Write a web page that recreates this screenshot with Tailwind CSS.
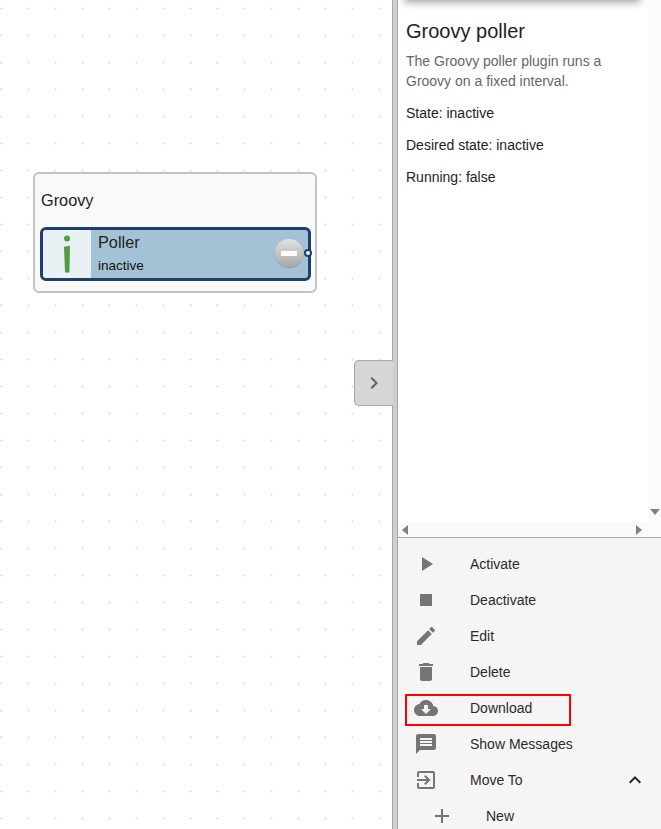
<!DOCTYPE html>
<html lang="en">
<head>
  <meta charset="UTF-8">
  <title>Groovy poller</title>
  <script src="https://cdn.jsdelivr.net/npm/@tailwindcss/browser@4"></script>
</head>
<body class="bg-white overflow-hidden font-['Liberation_Sans',Arial,sans-serif] text-[#222]">
  <div class="flex w-[661px] h-[829px] overflow-hidden">

    <!-- canvas -->
    <div class="relative w-[392px] h-full bg-white bg-[radial-gradient(circle_at_1.5px_8.5px,#e6e6e6_1px,transparent_1.4px)] bg-[size:27px_27px]">
      <div class="absolute left-[33px] top-[172px] w-[284px] h-[121px] bg-[#f9f9f9] border-2 border-[#c2c2c2] rounded-md">
        <div class="absolute left-[6px] top-[16px] text-[16.3px] leading-5">Groovy</div>
        <div class="absolute left-[5px] top-[53px] w-[271px] h-[54px] flex bg-[#a4c2d5] border-[3px] border-[#1d3f6b] rounded-md">
          <div class="w-[48px] h-full flex items-center justify-center bg-[#e9f1f5] rounded-l-[3px]">
            <svg width="12" height="40" viewBox="0 0 12 40">
              <circle cx="6" cy="4.5" r="3" fill="#4f9f3f"/>
              <path d="M3 12.8 L9 11.8 L8.4 38.5 H4 Z" fill="#4f9f3f"/>
            </svg>
          </div>
          <div class="pl-[7px] flex flex-col">
            <div class="text-[16.3px] leading-5 mt-[2px]">Poller</div>
            <div class="text-[13.5px] leading-4 mt-[6px] text-[#111]">inactive</div>
          </div>
          <div class="absolute left-[232px] top-[9px] w-[28px] h-[28px] rounded-full bg-[linear-gradient(#e2e2e2,#a8a8a8)] shadow-[0_1px_1px_#8a9aa5] flex items-center justify-center">
            <div class="w-4 h-[5px] bg-white"></div>
          </div>
          <div class="absolute left-[261px] top-[19px] w-[8px] h-[8px] rounded-full bg-white border-2 border-[#1d3f6b]"></div>
        </div>
      </div>

      <!-- panel toggle -->
      <button class="absolute left-[354px] top-[360px] w-[39px] h-[46px] flex items-center justify-center bg-[#d6d6d6] border border-r-0 border-[#a8a8a8] rounded-l-[5px]">
        <svg width="24" height="24" viewBox="0 0 24 24" fill="#616161"><path d="M10 6L8.59 7.41 13.17 12l-4.58 4.59L10 18l6-6z"/></svg>
      </button>
    </div>

    <!-- splitter -->
    <div class="w-[6px] h-full bg-[#cfcfcf] border-x border-[#a6a6a6]"></div>

    <!-- right panel -->
    <div class="w-[263px] h-full flex flex-col">
      <div class="relative h-[538px] shrink-0 border-b border-[#a9a9a9] overflow-hidden flex">
        <div class="absolute left-[8px] top-[-20px] w-[232px] h-[20px] bg-white shadow-[0_0_9px_2px_rgba(0,0,0,0.4)]"></div>
        <div class="w-[250px] h-full flex flex-col">
          <div class="flex-1 pl-2 pt-[20px] text-sm">
            <h2 class="text-xl leading-[23px] text-[#222]">Groovy poller</h2>
            <p class="mt-[8px] leading-5 text-[#666]">The Groovy poller plugin runs a<br>Groovy on a fixed interval.</p>
            <p class="mt-3 leading-5">State: inactive</p>
            <p class="mt-3 leading-5">Desired state: inactive</p>
            <p class="mt-3 leading-5">Running: false</p>
          </div>
          <div class="h-[15px] bg-[#fafafa] flex items-center justify-between px-[4px]">
            <svg width="7" height="10" viewBox="0 0 7 10" fill="#808080"><path d="M6 0v10L0 5z"/></svg>
            <svg width="7" height="10" viewBox="0 0 7 10" fill="#808080" class="mr-[1px]"><path d="M0 0v10l6-5z"/></svg>
          </div>
        </div>
        <div class="w-[13px] h-full bg-[#fcfcfc] relative">
          <svg width="10" height="6" viewBox="0 0 10 6" fill="#808080" class="absolute left-[2px] top-[509px]"><path d="M0 0h10L5 6z"/></svg>
        </div>
      </div>

      <ul class="flex-1 bg-[#f5f5f5] pt-2 text-sm text-[#2b2b2b] overflow-hidden">
        <li class="h-9 flex items-center pl-4">
          <div class="w-14"><svg width="24" height="24" viewBox="0 0 24 24" fill="#757575"><path d="M8 5v14l11-7z"/></svg></div>
          <span>Activate</span>
        </li>
        <li class="h-9 flex items-center pl-4">
          <div class="w-14"><svg width="24" height="24" viewBox="0 0 24 24" fill="#757575"><path d="M6 6h12v12H6z"/></svg></div>
          <span>Deactivate</span>
        </li>
        <li class="h-9 flex items-center pl-4">
          <div class="w-14"><svg width="24" height="24" viewBox="0 0 24 24" fill="#757575"><path d="M3 17.25V21h3.75L17.81 9.94l-3.75-3.75L3 17.25zM20.71 7.04c.39-.39.39-1.02 0-1.41l-2.34-2.34c-.39-.39-1.02-.39-1.41 0l-1.83 1.83 3.75 3.75 1.83-1.83z"/></svg></div>
          <span>Edit</span>
        </li>
        <li class="h-9 flex items-center pl-4">
          <div class="w-14"><svg width="24" height="24" viewBox="0 0 24 24" fill="#757575"><path d="M6 19c0 1.1.9 2 2 2h8c1.1 0 2-.9 2-2V7H6v12zM19 4h-3.5l-1-1h-5l-1 1H5v2h14V4z"/></svg></div>
          <span>Delete</span>
        </li>
        <li class="relative h-9 flex items-center pl-4">
          <div class="w-14"><svg width="24" height="24" viewBox="0 0 24 24" fill="#757575"><path d="M19.35 10.04C18.67 6.59 15.64 4 12 4 9.11 4 6.6 5.64 5.35 8.04 2.34 8.36 0 10.91 0 14c0 3.31 2.69 6 6 6h13c2.76 0 5-2.24 5-5 0-2.64-2.05-4.78-4.65-4.96zM17 13l-5 5-5-5h3V9h4v4h3z"/></svg></div>
          <span>Download</span>
          <div class="absolute left-[7px] top-[4px] w-[166px] h-[32px] border-2 border-[#f00]"></div>
        </li>
        <li class="h-9 flex items-center pl-4">
          <div class="w-14"><svg width="24" height="24" viewBox="0 0 24 24" fill="#757575"><path d="M20 2H4c-1.1 0-1.99.9-1.99 2L2 22l4-4h14c1.1 0 2-.9 2-2V4c0-1.1-.9-2-2-2zm-2 12H6v-2h12v2zm0-3H6V9h12v2zm0-3H6V6h12v2z"/></svg></div>
          <span>Show Messages</span>
        </li>
        <li class="h-9 flex items-center pl-4 pr-[14px]">
          <div class="w-14"><svg width="24" height="24" viewBox="0 0 24 24" fill="#757575"><path d="M10.09 15.59L11.5 17l5-5-5-5-1.41 1.41L12.67 11H3v2h9.67l-2.58 2.59zM19 3H5c-1.11 0-2 .9-2 2v4h2V5h14v14H5v-4H3v4c0 1.1.89 2 2 2h14c1.1 0 2-.9 2-2V5c0-1.1-.9-2-2-2z"/></svg></div>
          <span class="flex-1">Move To</span>
          <svg width="24" height="24" viewBox="0 0 24 24" fill="#222"><path d="M12 8l-6 6 1.41 1.41L12 10.83l4.59 4.58L18 14z"/></svg>
        </li>
        <li class="h-9 flex items-center pl-8">
          <div class="w-14"><svg width="24" height="24" viewBox="0 0 24 24" fill="#757575"><path d="M19 13h-6v6h-2v-6H5v-2h6V5h2v6h6v2z"/></svg></div>
          <span>New</span>
        </li>
      </ul>
    </div>
  </div>
</body>
</html>
